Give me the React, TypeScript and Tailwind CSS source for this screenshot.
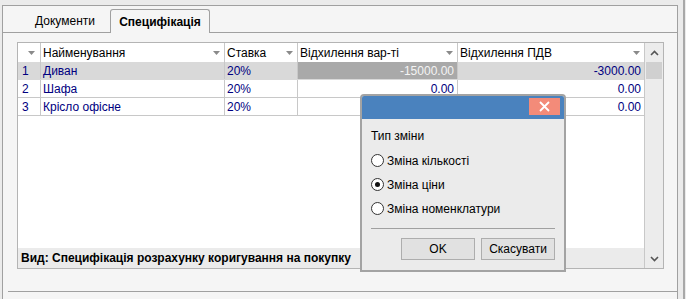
import React from "react";

const font = { fontFamily: '"Liberation Sans", Arial, sans-serif' };

function Caret() {
  return (
    <svg width="7" height="4" viewBox="0 0 7 4" className="shrink-0">
      <path d="M0 0h7L3.5 4z" fill="#8a8a8a" />
    </svg>
  );
}

function HeadCell({ title, w, last }: { title: string; w: string; last?: boolean }) {
  return (
    <div className={`${w} h-full flex items-center pl-[2px] pr-[4px] ${last ? "" : "border-r border-[#c8c8c8]"}`}>
      <span className="flex-1 truncate">{title}</span>
      <Caret />
    </div>
  );
}

const rows = [
  { n: "1", name: "Диван", rate: "20%", diff: "-15000.00", vat: "-3000.00" },
  { n: "2", name: "Шафа", rate: "20%", diff: "0.00", vat: "0.00" },
  { n: "3", name: "Крісло офісне", rate: "20%", diff: "0.00", vat: "0.00" },
];

function Radio({ checked, label }: { checked?: boolean; label: string }) {
  return (
    <div className="flex items-center h-[13px] gap-[3px]">
      <div className="w-[13px] h-[13px] rounded-full border border-[#333] bg-white flex items-center justify-center">
        {checked && <div className="w-[5px] h-[5px] rounded-full bg-[#111]" />}
      </div>
      <span>{label}</span>
    </div>
  );
}

export default function App() {
  return (
    <div className="relative w-[686px] h-[299px] bg-[#ebebeb] flex text-[12px] leading-[14px] text-black overflow-hidden" style={font}>
      <div className="w-[2px]" />
      {/* tab control frame */}
      <div className="mt-[5px] w-[676px] h-[294px] border-l border-t border-r border-[#a0a0a0] bg-[#f5f5f5] flex flex-col">
        <div className="h-[26px] flex items-end pl-[17px]">
          <div className="w-[90px] h-[22px] flex items-center justify-center">Документи</div>
          <div className="w-[100px] h-[24px] -mb-px relative z-10 border border-b-0 border-[#a0a0a0] rounded-t-[3px] bg-[#f5f5f5] flex items-center justify-center font-bold">
            Специфікація
          </div>
        </div>
        <div className="border-t border-[#a0a0a0] flex-1 flex flex-col pt-[9px]">
          {/* grid */}
          <div className="ml-[14px] w-[647px] h-[227px] border border-[#b4b4b4] bg-white flex">
            <div className="flex-1 flex flex-col">
              <div className="h-[19px] flex">
                <div className="w-[23px] h-full flex items-center justify-end pr-[5px] border-r border-[#c8c8c8]">
                  <Caret />
                </div>
                <HeadCell title="Найменування" w="w-[184px]" />
                <HeadCell title="Ставка" w="w-[73px]" />
                <HeadCell title="Відхилення вар-ті" w="w-[160px]" />
                <HeadCell title="Відхилення ПДВ" w="w-[186px]" last />
              </div>
              {rows.map((r, i) => {
                const sel = i === 0;
                return (
                  <div
                    key={r.n}
                    className={`h-[18px] flex text-[#000080] border-b ${sel ? "bg-[#d9d9d9] border-[#d9d9d9]" : "border-[#c8c8c8]"}`}
                  >
                    <div className="w-[23px] pl-[4px] flex items-center border-r border-[#c8c8c8]">{r.n}</div>
                    <div className="w-[184px] pl-[2px] flex items-center border-r border-[#c8c8c8]">{r.name}</div>
                    <div className="w-[73px] pl-[2px] flex items-center border-r border-[#c8c8c8]">{r.rate}</div>
                    <div
                      className={`w-[160px] pr-[3px] flex items-center justify-end border-r border-[#c8c8c8] ${sel ? "bg-[#a9a9a9] text-[#f4f4f4]" : ""}`}
                    >
                      {r.diff}
                    </div>
                    <div className="w-[186px] pr-[3px] flex items-center justify-end">{r.vat}</div>
                  </div>
                );
              })}
              <div className="flex-1" />
              <div className="h-[20px] bg-[#ebebeb] flex items-center pl-[3px] font-bold">
                Вид: Специфікація розрахунку коригування на покупку
              </div>
            </div>
            {/* scrollbar */}
            <div className="w-[20px] border-l border-[#c8c8c8] bg-[#ececec] flex flex-col items-center">
              <div className="h-[19px] flex items-center justify-center">
                <svg width="9" height="6" viewBox="0 0 9 6">
                  <path d="M1 5l3.5-3.5L8 5" stroke="#555" strokeWidth="1.6" fill="none" />
                </svg>
              </div>
              <div className="w-[16px] h-[17px] bg-[#d0d0d0]" />
              <div className="flex-1" />
              <div className="h-[19px] flex items-center justify-center">
                <svg width="9" height="6" viewBox="0 0 9 6">
                  <path d="M1 1l3.5 3.5L8 1" stroke="#555" strokeWidth="1.6" fill="none" />
                </svg>
              </div>
            </div>
          </div>
          <div className="mt-[22px] ml-[5px] border-b border-[#a0a0a0]" />
        </div>
      </div>
      <div className="w-[5px]" />
      <div className="w-[2px] h-full bg-[#a8a8a8]" />

      {/* dialog */}
      <div className="absolute left-[360px] top-[94px] w-[206px] h-[178px] border-2 border-[#a3a3a3] rounded-t-[4px] bg-[#ebebeb] flex flex-col">
        <div className="h-[23px] bg-[#4a82be] rounded-t-[2px] flex items-start justify-end pt-[2px] pr-[4px]">
          <div className="w-[31px] h-[17px] bg-[#f38b79] flex items-center justify-center">
            <svg width="11" height="11" viewBox="0 0 11 11">
              <path d="M1 1l9 9M10 1l-9 9" stroke="#fff" strokeWidth="1.8" />
            </svg>
          </div>
        </div>
        <div className="flex-1 flex flex-col pl-[9px] pr-[9px]">
          <div className="mt-[10px]">Тип зміни</div>
          <div className="mt-[11px] flex flex-col gap-[11px]">
            <Radio label="Зміна кількості" />
            <Radio checked label="Зміна ціни" />
            <Radio label="Зміна номенклатури" />
          </div>
          <div className="mt-[13px] border-t border-[#a0a0a0]" />
          <div className="mt-[9px] flex justify-end gap-[6px]">
            <div className="w-[74px] h-[22px] bg-[#e1e1e1] border border-[#adadad] flex items-center justify-center">OK</div>
            <div className="w-[74px] h-[22px] bg-[#e1e1e1] border border-[#adadad] flex items-center justify-center">Скасувати</div>
          </div>
        </div>
      </div>
    </div>
  );
}
